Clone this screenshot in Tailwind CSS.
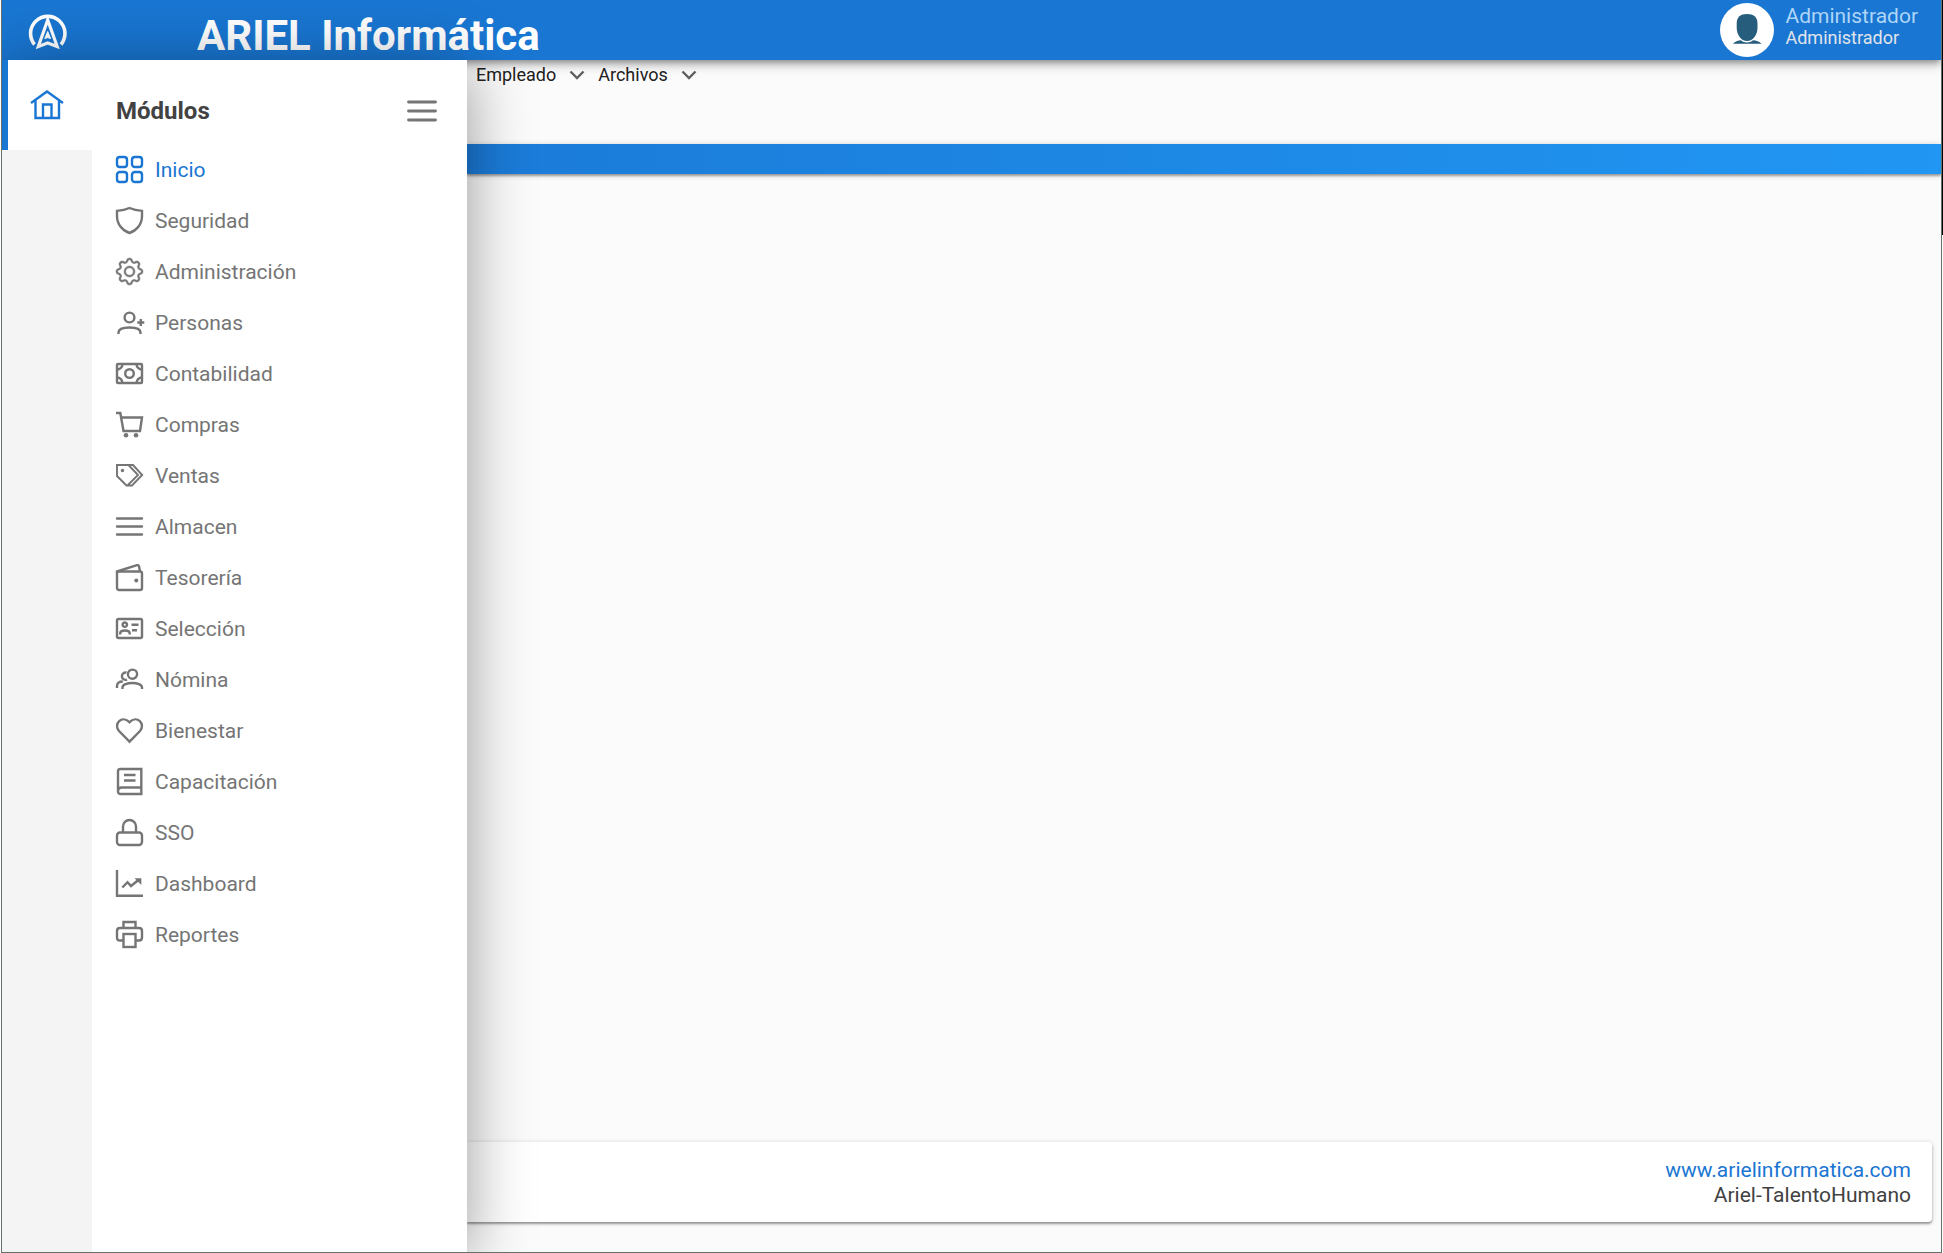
<!DOCTYPE html>
<html lang="es">
<head>
  <meta charset="UTF-8">
  <meta name="viewport" content="width=device-width, initial-scale=1.0">
  <title>ARIEL Informática</title>
  <script src="https://cdn.jsdelivr.net/npm/@tailwindcss/browser@4"></script>
</head>
<body class="flex min-h-screen bg-white font-['Roboto',sans-serif] text-[#424242]">
  <div class="ml-px flex grow flex-col overflow-hidden border-x border-b border-[#65706b] bg-[#fbfbfb]">
    <!-- Top bar -->
    <header class="relative z-10 flex h-15 shrink-0 items-center bg-[#1976d2] pl-6 pr-[23px] text-white shadow-[0_3px_6px_-1px_rgba(0,0,0,0.3),0_6px_8px_rgba(0,0,0,0.14),0_2px_15px_rgba(0,0,0,0.12)]">
      <a href="#" aria-label="Inicio" class="mt-1 shrink-0">
        <svg class="h-10 w-11" viewBox="0 0 44 40" fill="none" stroke="currentColor">
          <path d="M8.500 32.500A17.200 17.200 0 1 1 35 32.500" stroke-width="3.600"/>
          <path d="M21.700 8 12.300 34.500 21.700 31 31.200 34.500Z" stroke-width="3.200"/>
          <path d="M21.700 19.500 18.800 26.500 21.700 25.600 24.600 26.500Z" fill="currentColor" stroke-width="1"/>
        </svg>
      </a>
      <h1 class="ml-[127px] mt-3 text-[42px] font-bold leading-10">ARIEL Informática</h1>
      <button type="button" class="ml-auto flex items-center gap-[11px] text-left">
        <svg class="size-[54px]" viewBox="0 0 54 54">
          <circle cx="27" cy="27" r="27" fill="#fff"/>
          <path d="M27 11C20.500 11 16.700 14 16.700 20.500V24.500C16.700 32 21 38 27 38S37.500 32 37.500 24.500V20.500C37.500 14 33.500 11 27 11Z" fill="#265c7c"/>
          <path d="M13 40.800C15 38.500 18 37.600 21 37.300 24 40.300 30 40.300 33 37.300 36 37.600 39.500 38.500 41.500 40.800Z" fill="#265c7c"/>
        </svg>
        <span class="flex flex-col pb-2">
          <span class="text-[21px] leading-6 text-[#add5f7]">Administrador</span>
          <span class="text-[18px] leading-5 text-[#e0e4ea]">Administrador</span>
        </span>
      </button>
    </header>

    <div class="flex grow">
      <!-- Module drawer -->
      <aside class="relative z-20 flex w-[465px] shrink-0 bg-white shadow-[0_8px_60px_rgba(0,0,0,0.4)]">
        <div class="w-[90px] bg-[#f4f4f4]">
          <a href="#" aria-label="Módulos" class="flex h-[90px] items-center border-l-6 border-[#1976d2] bg-white pl-[22px] text-[#1976d2]">
            <svg class="h-[30px] w-[34px]" viewBox="0 0 34 30" fill="none" stroke="currentColor" stroke-width="2.400">
              <path d="M1 13 17 1.500 33 13M5.500 10V28H29V10M13 28V14.500H21.500V28"/>
            </svg>
          </a>
        </div>
        <div class="grow">
          <div class="flex h-[84px] items-center justify-between pb-0.5 pl-6 pr-[30px] pt-5">
            <h2 class="text-[24px] font-bold">Módulos</h2>
            <button type="button" aria-label="Cerrar menú" class="text-[#757575]">
              <svg class="h-[22px] w-[30px]" viewBox="0 0 30 22" stroke="currentColor" stroke-width="2.800" stroke-linecap="round">
                <path d="M1.500 2H28.500M1.500 11H28.500M1.500 20H28.500"/>
              </svg>
            </button>
          </div>
          <nav>
            <ul id="modules" class="flex flex-col text-[21px]"></ul>
          </nav>
        </div>
      </aside>

      <!-- Content -->
      <main class="flex min-w-0 grow flex-col">
        <nav class="flex h-[84px] items-start pl-[9px] text-[18px] leading-[30px] text-[#212121]">
          <button type="button" class="flex items-center gap-[13px]">Empleado
            <svg class="h-3 w-4" viewBox="0 0 16 12" fill="none" stroke="#616161" stroke-width="2.400"><path d="M1.500 2.500 8 9 14.500 2.500"/></svg>
          </button>
          <button type="button" class="ml-[13px] flex items-center gap-[13px]">Archivos
            <svg class="h-3 w-4" viewBox="0 0 16 12" fill="none" stroke="#616161" stroke-width="2.400"><path d="M1.500 2.500 8 9 14.500 2.500"/></svg>
          </button>
        </nav>
        <div class="h-[30px] shrink-0 bg-linear-to-r from-[#1b7bd8] to-[#2196f3] shadow-[0_2px_2px_rgba(0,0,0,0.3),0_1px_6px_rgba(0,0,0,0.2)]"></div>
        <footer class="mb-[30px] mr-[9px] mt-auto flex h-20 flex-col items-end justify-center rounded-r bg-white pt-px pr-[21px] text-[21px] leading-[25px] shadow-[0_2px_2px_rgba(0,0,0,0.3),0_1px_5px_rgba(0,0,0,0.2)]">
          <a href="#" class="text-[#1976d2]">www.arielinformatica.com</a>
          <span>Ariel-TalentoHumano</span>
        </footer>
      </main>
    </div>
  </div>
  <!-- Window edge -->
  <div class="w-px"><div class="h-[235px] bg-black"></div></div>

  <script>
    const modules = [
      ['Inicio', '<rect x="1" y="1" width="10" height="10" rx="2.8"/><rect x="16" y="1" width="10" height="10" rx="2.8"/><rect x="1" y="16" width="10" height="10" rx="2.8"/><rect x="16" y="16" width="10" height="10" rx="2.8"/>'],
      ['Seguridad', '<path d="M13.500 1C9.500 2.800 5 3.600 1 3.900V9C1 17 6 23.500 13.500 26 21 23.500 26 17 26 9V3.900C22 3.600 17.500 2.800 13.500 1Z"/>'],
      ['Administración', '<g transform="scale(1.6875)" fill="currentColor" stroke-width=".3"><path d="M8 4.754a3.246 3.246 0 1 0 0 6.492 3.246 3.246 0 0 0 0-6.492zM5.754 8a2.246 2.246 0 1 1 4.492 0 2.246 2.246 0 0 1-4.492 0z"/><path d="M9.796 1.343c-.527-1.79-3.065-1.79-3.592 0l-.094.319a.873.873 0 0 1-1.255.52l-.292-.16c-1.64-.892-3.433.902-2.54 2.541l.159.292a.873.873 0 0 1-.52 1.255l-.319.094c-1.79.527-1.79 3.065 0 3.592l.319.094a.873.873 0 0 1 .52 1.255l-.16.292c-.892 1.64.901 3.434 2.541 2.54l.292-.159a.873.873 0 0 1 1.255.52l.094.319c.527 1.79 3.065 1.79 3.592 0l.094-.319a.873.873 0 0 1 1.255-.52l.292.16c1.64.893 3.434-.902 2.54-2.541l-.159-.292a.873.873 0 0 1 .52-1.255l.319-.094c1.79-.527 1.79-3.065 0-3.592l-.319-.094a.873.873 0 0 1-.52-1.255l.16-.292c.893-1.64-.902-3.433-2.541-2.54l-.292.159a.873.873 0 0 1-1.255-.52l-.094-.319zm-2.633.283c.246-.835 1.428-.835 1.674 0l.094.319a1.873 1.873 0 0 0 2.693 1.115l.291-.16c.764-.415 1.6.42 1.184 1.185l-.159.292a1.873 1.873 0 0 0 1.116 2.692l.318.094c.835.246.835 1.428 0 1.674l-.319.094a1.873 1.873 0 0 0-1.115 2.693l.16.291c.415.764-.42 1.6-1.185 1.184l-.291-.159a1.873 1.873 0 0 0-2.693 1.116l-.094.318c-.246.835-1.428.835-1.674 0l-.094-.319a1.873 1.873 0 0 0-2.692-1.115l-.292.16c-.764.415-1.6-.42-1.184-1.185l.159-.291A1.873 1.873 0 0 0 1.945 8.93l-.319-.094c-.835-.246-.835-1.428 0-1.674l.319-.094A1.873 1.873 0 0 0 3.06 4.377l-.16-.292c-.415-.764.42-1.6 1.185-1.184l.292.159a1.873 1.873 0 0 0 2.692-1.115l.094-.319z"/></g>'],
      ['Personas', '<circle cx="13.500" cy="8.500" r="4.900"/><path d="M2.500 25V23.500C2.500 20 6 18.500 13.500 18.500S24.500 20 24.500 23.500V25M24.800 10V17M21.300 13.500H28.300"/>'],
      ['Contabilidad', '<rect x="1" y="4" width="25" height="19" rx="1"/><circle cx="13.500" cy="13.500" r="4.300"/><path d="M6.500 4A5.500 5.500 0 0 1 1 9.500M20.500 4A5.500 5.500 0 0 0 26 9.500M1 17.500A5.500 5.500 0 0 1 6.500 23M26 17.500A5.500 5.500 0 0 0 20.500 23"/>'],
      ['Compras', '<path d="M0 2H4.300L7.500 20H24L26 6.500H5.200"/><circle cx="10" cy="24.300" r="2.300" fill="currentColor" stroke="none"/><circle cx="20" cy="24.300" r="2.300" fill="currentColor" stroke="none"/>'],
      ['Ventas', '<path d="M1 3H12.500L22 13 11.500 23.500H10.500L1 14ZM12.500 3H17L26.200 13 16 23.500H11.500" stroke-width="1.900"/><circle cx="6.500" cy="8.500" r="1.700" fill="currentColor" stroke="none"/>'],
      ['Almacen', '<path d="M1 5.500H26M1 13.500H26M1 21.500H26" stroke-linecap="round"/>'],
      ['Tesorería', '<rect x="1" y="7.500" width="25" height="18.500" rx="2"/><path d="M1 9V7.500L21 1.200Q22.700 .8 23 2.300L24 7.500"/><circle cx="20.300" cy="16.500" r="2" fill="currentColor" stroke="none"/>'],
      ['Selección', '<rect x="1" y="4" width="25" height="19" rx="1.500"/><circle cx="8.800" cy="9.700" r="2.200"/><path d="M4.200 19.500V18.500C4.200 14.500 13.700 14.500 13.700 18.500V19.500M15.500 9.800H22.500M16 15.200H21"/>'],
      ['Nómina', '<circle cx="16.500" cy="8.200" r="4.600"/><path d="M6.500 23V21.500C6.500 15.500 26 15.500 26 21.500V23M11 13.600A3.700 3.700 0 1 1 10.500 6.600M1 22V20C1 17 3 15.500 6.800 15.500"/>'],
      ['Bienestar', '<path d="M13.500 24.700 3 14C-3 7 6 -2.500 13.500 5.200 21 -2.500 30 7 24 14Z"/>'],
      ['Capacitación', '<path d="M25.300 19.500V1H4.500Q2 1 2 3.500V23.200C2 21 3 19.500 5.500 19.500H25.300V26H5Q2 26 2 23.200M8 7H19.500M8 12.500H19.500"/>'],
      ['SSO', '<rect x="1" y="13.500" width="25" height="12.500" rx="3"/><path d="M7 13.500V7.500A6.500 6.500 0 0 1 20 7.500V13.500"/>'],
      ['Dashboard', '<path d="M1 0V25.800H27M6.300 17.500 11.500 12.200 15 16 23 9.500"/><path d="M18.500 8.200H25.300V15Z" fill="currentColor" stroke="none"/>'],
      ['Reportes', '<path d="M7.500 7V1H19.500V7M7.500 19.500H4Q1 19.500 1 16.500V10Q1 7 4 7H23Q26 7 26 10V16.500Q26 19.500 23 19.500H19.500"/><rect x="7.500" y="13" width="12" height="13"/>'],
    ];

    document.getElementById('modules').innerHTML = modules.map(([name, icon], i) => `
      <li>
        <a href="#" class="flex h-[51px] items-center gap-3 pl-6 ${i === 0 ? 'text-[#1976d2]' : 'text-[#757575]'}">
          <svg class="size-[27px] shrink-0 overflow-visible" viewBox="0 0 27 27" fill="none" stroke="currentColor" stroke-width="2.400">${icon}</svg>
          <span class="pt-0.5">${name}</span>
        </a>
      </li>`).join('');
  </script>
</body>
</html>
